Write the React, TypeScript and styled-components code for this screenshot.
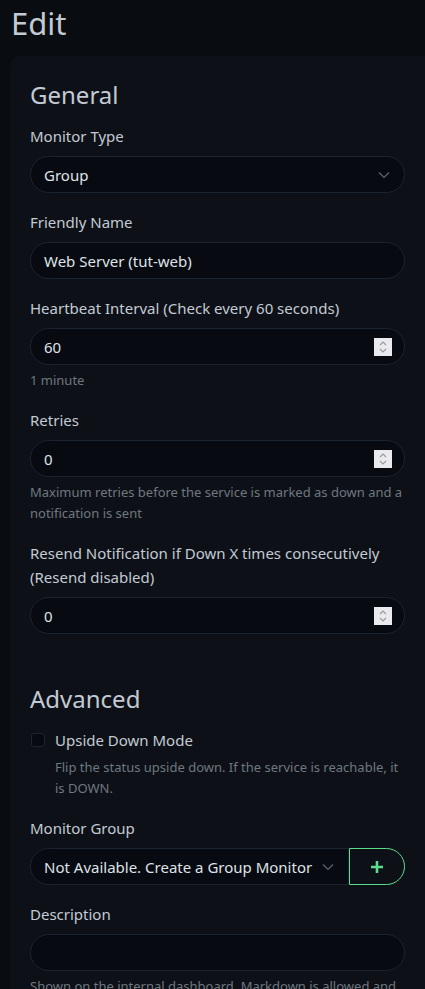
import styled, { createGlobalStyle } from 'styled-components'

const GlobalStyle = createGlobalStyle`
  html, body {
    margin: 0;
    padding: 0;
    background: #090c10;
  }
  body {
    font-family: 'Noto Sans', 'Open Sans', sans-serif;
    color: #c9d1d9;
    overflow: hidden;
  }
`

const Page = styled.div`
  padding: 0 0 0 10px;
`

const Title = styled.h1`
  margin: 0;
  padding: 1px 0 0 1px;
  height: 55px;
  font-size: 31px;
  font-weight: 400;
  color: #c3cad4;
  line-height: 44px;
`

const Card = styled.div`
  background: #0d1117;
  border-radius: 10px 0 0 0;
  padding: 19px 20px 20px 20px;
  margin-right: -10px;
  width: 375px;
`

const SectionTitle = styled.h2<{ $top?: number }>`
  margin: ${(p) => p.$top ?? 0}px 0 9px 0;
  font-size: 24px;
  font-weight: 400;
  color: #c3cad4;
  line-height: 40px;
`

const Field = styled.div`
  margin-bottom: 17px;
`

const Label = styled.label`
  display: block;
  font-size: 15px;
  line-height: 24px;
  color: #c3cad4;
  margin-bottom: 8px;
`

const Control = styled.div<{ $joined?: boolean }>`
  position: relative;
  box-sizing: border-box;
  height: 37px;
  display: flex;
  align-items: center;
  padding: 0 12px 0 13px;
  background: #070a10;
  border: 1px solid #1c2330;
  border-radius: ${(p) => (p.$joined ? '19px 0 0 19px' : '19px')};
  font-size: 15px;
  color: #dfe3e8;
  flex: 1;
  min-width: 0;
  white-space: nowrap;
`

const Value = styled.span`
  flex: 1;
`

const Chevron = () => (
  <svg width="12" height="8" viewBox="0 0 12 8" style={{ marginRight: 2 }}>
    <path d="M1 1.5 L6 6.5 L11 1.5" fill="none" stroke="#5c6570" strokeWidth="1.2" />
  </svg>
)

const SpinBox = styled.span`
  width: 18px;
  height: 18px;
  background: #e9e9ee;
  display: flex;
  align-items: center;
  justify-content: center;
`

const Spinner = () => (
  <SpinBox>
    <svg width="10" height="14" viewBox="0 0 10 14">
      <path d="M2 5 L5 2 L8 5" fill="none" stroke="#9a9aa2" strokeWidth="1.2" />
      <path d="M2 9 L5 12 L8 9" fill="none" stroke="#9a9aa2" strokeWidth="1.2" />
    </svg>
  </SpinBox>
)

const Help = styled.div`
  font-size: 13px;
  line-height: 21px;
  color: #6f7780;
  margin-top: 5px;
`

const CheckRow = styled.div`
  display: flex;
  align-items: center;
  gap: 10px;
  margin-top: 4px;
`

const CheckBox = styled.span`
  width: 14px;
  height: 14px;
  box-sizing: border-box;
  border: 1px solid #1c2330;
  background: #070a10;
  border-radius: 3px;
  margin-left: 1px;
`

const CheckLabel = styled.span`
  font-size: 15px;
  line-height: 24px;
  color: #c3cad4;
`

const CheckHelp = styled(Help)`
  margin-top: 5px;
  padding-left: 25px;
  margin-bottom: 17px;
`

const InputGroup = styled.div`
  display: flex;
`

const AddButton = styled.button`
  width: 56px;
  height: 37px;
  box-sizing: border-box;
  background: transparent;
  border: 1px solid #5cdd8b;
  border-radius: 0 19px 19px 0;
  display: flex;
  align-items: center;
  justify-content: center;
  padding: 0;
`

const PlusIcon = () => (
  <svg width="14" height="14" viewBox="0 0 14 14">
    <path d="M7 1 V13 M1 7 H13" stroke="#5cdd8b" strokeWidth="2.6" />
  </svg>
)

export default function App() {
  return (
    <Page>
      <GlobalStyle />
      <Title>Edit</Title>
      <Card>
        <SectionTitle>General</SectionTitle>

        <Field>
          <Label>Monitor Type</Label>
          <Control>
            <Value>Group</Value>
            <Chevron />
          </Control>
        </Field>

        <Field>
          <Label>Friendly Name</Label>
          <Control>
            <Value>Web Server (tut-web)</Value>
          </Control>
        </Field>

        <Field>
          <Label>Heartbeat Interval (Check every 60 seconds)</Label>
          <Control>
            <Value>60</Value>
            <Spinner />
          </Control>
          <Help>1 minute</Help>
        </Field>

        <Field>
          <Label>Retries</Label>
          <Control>
            <Value>0</Value>
            <Spinner />
          </Control>
          <Help>
            Maximum retries before the service is marked as down and a notification is sent
          </Help>
        </Field>

        <Field>
          <Label>Resend Notification if Down X times consecutively (Resend disabled)</Label>
          <Control>
            <Value>0</Value>
            <Spinner />
          </Control>
        </Field>

        <SectionTitle $top={45}>Advanced</SectionTitle>

        <CheckRow>
          <CheckBox />
          <CheckLabel>Upside Down Mode</CheckLabel>
        </CheckRow>
        <CheckHelp>
          Flip the status upside down. If the service is reachable, it is DOWN.
        </CheckHelp>

        <Field>
          <Label>Monitor Group</Label>
          <InputGroup>
            <Control $joined>
              <Value>Not Available. Create a Group Monitor</Value>
              <Chevron />
            </Control>
            <AddButton>
              <PlusIcon />
            </AddButton>
          </InputGroup>
        </Field>

        <Field>
          <Label>Description</Label>
          <Control>
            <Value></Value>
          </Control>
          <Help>
            Shown on the internal dashboard. Markdown is allowed and sanitized before display.
          </Help>
        </Field>
      </Card>
    </Page>
  )
}
